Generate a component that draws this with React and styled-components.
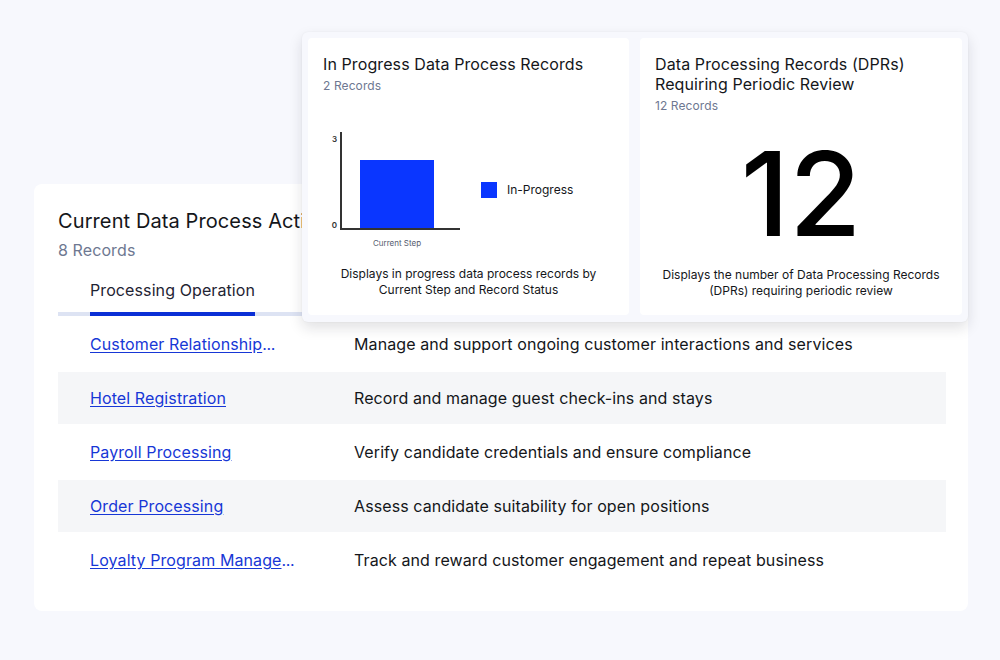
import React from 'react';
import styled, { createGlobalStyle } from 'styled-components';

const GlobalStyle = createGlobalStyle`
    html, body {
        margin: 0;
        padding: 0;
        background: #f7f8fd;
        font-family: Inter, "Noto Sans", sans-serif;
        color: #14161a;
    }
`;

const Page = styled.div`
    position: relative;
    width: 1000px;
    height: 660px;
    padding: 184px 32px 0 34px;
    box-sizing: border-box;
    overflow: hidden;
`;

const MainCard = styled.section`
    background: #fff;
    border-radius: 8px;
    padding: 24px 22px 25px 24px;
    box-sizing: border-box;
    width: 934px;
`;

const Title = styled.h2`
    margin: 0;
    font-size: 20px;
    line-height: 26px;
    font-weight: 400;
    letter-spacing: 0.1px;
    white-space: nowrap;
`;

const Count = styled.div`
    margin-top: 6px;
    font-size: 16px;
    line-height: 20px;
    letter-spacing: 0.1px;
    color: #6e7891;
`;

const HeaderRow = styled.div`
    display: grid;
    grid-template-columns: 296px 1fr;
    border-bottom: 4px solid #dde3f3;
`;

const HeaderCell = styled.div`
    padding: 18px 0 0 32px;
    display: flex;
`;

const HeaderLabel = styled.span`
    font-size: 16px;
    line-height: 24px;
    letter-spacing: 0.1px;
    padding-bottom: 10px;
    margin-bottom: -4px;
    color: #1f2433;
    border-bottom: ${({ active }) => (active ? '4px solid #0a2fd6' : '4px solid transparent')};
`;

const Rows = styled.div`
    display: flex;
    flex-direction: column;
    gap: 2px;
    margin-top: 2px;
`;

const Row = styled.div`
    display: grid;
    grid-template-columns: 296px 1fr;
    align-items: center;
    height: 52px;
    background: ${({ striped }) => (striped ? '#f5f6f8' : '#fff')};
`;

const LinkCell = styled.div`
    padding-left: 32px;
    font-size: 16px;
    line-height: 22px;
    letter-spacing: 0.1px;
    color: #1737d6;
    white-space: nowrap;
`;

const RowLink = styled.a`
    color: #1737d6;
    text-decoration: underline;
    text-underline-offset: 2px;
    cursor: pointer;
`;

const Dots = styled.span`
    letter-spacing: -0.4px;
`;

const Desc = styled.div`
    font-size: 16px;
    line-height: 22px;
    letter-spacing: 0.1px;
    color: #14161a;
    white-space: nowrap;
`;

const Overlay = styled.div`
    position: absolute;
    top: 32px;
    left: 302px;
    width: 666px;
    height: 290px;
    box-sizing: border-box;
    padding: 6px 6px 7px 6px;
    background: #f7f8fd;
    border-radius: 6px;
    box-shadow: 0 6px 14px rgba(20, 24, 40, 0.13), 0 0 2px rgba(20, 24, 40, 0.06);
    display: grid;
    grid-template-columns: 321px 322px;
    gap: 11px;
`;

const Widget = styled.div`
    background: #fff;
    border-radius: 4px;
    padding: 16px 15px 16px 15px;
    display: flex;
    flex-direction: column;
    box-sizing: border-box;
`;

const WidgetTitle = styled.h3`
    margin: 0;
    font-size: 16px;
    line-height: 20px;
    font-weight: 400;
    letter-spacing: 0.1px;
    color: #14161a;
`;

const WidgetCount = styled.div`
    margin-top: 4px;
    font-size: 12px;
    line-height: 16px;
    letter-spacing: 0.1px;
    color: #6e7891;
`;

const ChartBox = styled.div`
    margin-top: 31px;
    height: 130px;
`;

const BigNumber = styled.div`
    flex: 1;
    display: flex;
    align-items: center;
    justify-content: center;
    font-size: 117px;
    font-weight: 500;
    color: #000;
    line-height: 1;
    padding-top: 6px;
`;

const Caption = styled.p`
    margin: ${({ top }) => top || 'auto'} 0 0 0;
    font-size: 12px;
    line-height: 16px;
    text-align: center;
    color: #14161a;
`;

const rows = [
    ['Customer Relationship Management', 'Manage and support ongoing customer interactions and services'],
    ['Hotel Registration', 'Record and manage guest check-ins and stays'],
    ['Payroll Processing', 'Verify candidate credentials and ensure compliance'],
    ['Order Processing', 'Assess candidate suitability for open positions'],
    ['Loyalty Program Management', 'Track and reward customer engagement and repeat business'],
];

const MAX_NAME = 22;

function OperationLink({ name }) {
    const cut = name.length > MAX_NAME;
    return (
        <LinkCell>
            <RowLink>{cut ? name.slice(0, MAX_NAME).trimEnd() : name}</RowLink>
            {cut && <Dots>...</Dots>}
        </LinkCell>
    );
}

function BarChart() {
    return (
        <svg width="290" height="130" viewBox="0 0 290 130">
            <text x="14" y="17" fontSize="8" fontWeight="600" fill="#333" textAnchor="end" fontFamily="Inter, sans-serif">3</text>
            <text x="14" y="103" fontSize="8" fontWeight="600" fill="#333" textAnchor="end" fontFamily="Inter, sans-serif">0</text>
            <rect x="37" y="35" width="74" height="69" fill="#0a36ff" />
            <line x1="18" y1="7" x2="18" y2="105" stroke="#333" strokeWidth="2" />
            <line x1="17" y1="104" x2="137" y2="104" stroke="#333" strokeWidth="2" />
            <text x="74" y="121" fontSize="8" fill="#555b6e" textAnchor="middle" fontFamily="Inter, sans-serif">Current Step</text>
            <rect x="158" y="57" width="16" height="16" fill="#0a36ff" />
            <text x="184" y="69" fontSize="12" fill="#14161a" fontFamily="Inter, sans-serif">In-Progress</text>
        </svg>
    );
}

export default function App() {
    return (
        <Page>
            <GlobalStyle />
            <MainCard>
                <Title>Current Data Process Activities</Title>
                <Count>8 Records</Count>
                <HeaderRow>
                    <HeaderCell><HeaderLabel active>Processing Operation</HeaderLabel></HeaderCell>
                    <HeaderCell />
                </HeaderRow>
                <Rows>
                    {rows.map(([name, desc], i) => (
                        <Row key={name} striped={i % 2 === 1}>
                            <OperationLink name={name} />
                            <Desc>{desc}</Desc>
                        </Row>
                    ))}
                </Rows>
            </MainCard>

            <Overlay>
                <Widget>
                    <WidgetTitle>In Progress Data Process Records</WidgetTitle>
                    <WidgetCount>2 Records</WidgetCount>
                    <ChartBox><BarChart /></ChartBox>
                    <Caption top="11px">Displays in progress data process records by<br />Current Step and Record Status</Caption>
                </Widget>
                <Widget>
                    <WidgetTitle>Data Processing Records (DPRs)<br />Requiring Periodic Review</WidgetTitle>
                    <WidgetCount>12 Records</WidgetCount>
                    <BigNumber>12</BigNumber>
                    <Caption top="0">Displays the number of Data Processing Records<br />(DPRs) requiring periodic review</Caption>
                </Widget>
            </Overlay>
        </Page>
    );
}
